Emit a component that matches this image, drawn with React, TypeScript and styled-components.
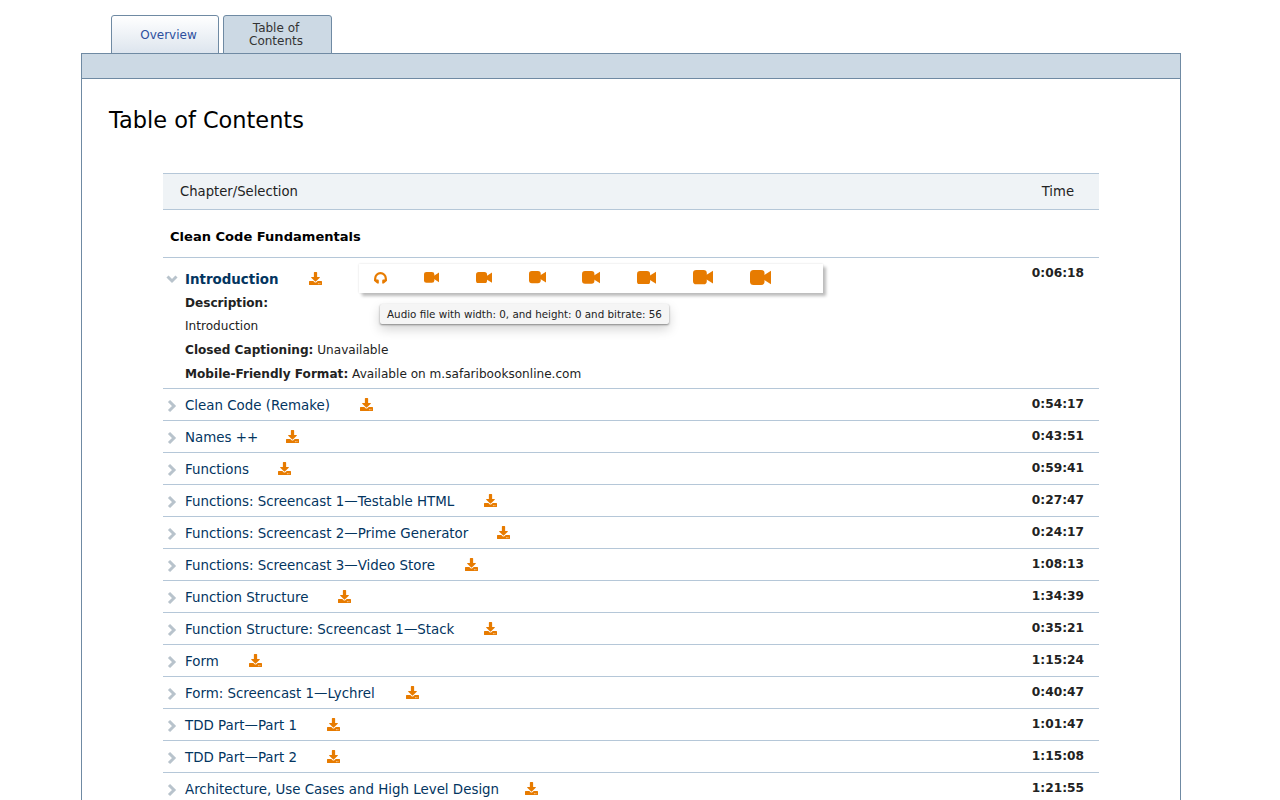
import styled, { createGlobalStyle } from "styled-components";
import { FaDownload } from "react-icons/fa";

const GlobalStyle = createGlobalStyle`
  html, body {
    margin: 0;
    padding: 0;
    height: 800px;
    overflow: hidden;
    background: #fff;
    font-family: "DejaVu Sans", Verdana, sans-serif;
    color: #222;
  }
`;

const Page = styled.div`
  width: 1100px;
  margin-left: 81px;
  padding-top: 15px;
`;

const Tabs = styled.div`
  display: flex;
  gap: 4px;
  padding-left: 30px;
  height: 38px;
`;

const Tab = styled.div<{ $active?: boolean }>`
  box-sizing: border-box;
  height: 39px;
  width: ${(p) => (p.$active ? 109 : 108)}px;
  padding: ${(p) => (p.$active ? "0 3px 0 0" : "2px 0 0 7px")};
  border: 1px solid #6f8aa3;
  border-radius: 3px 3px 0 0;
  display: flex;
  align-items: center;
  justify-content: center;
  text-align: center;
  font-size: 12px;
  line-height: 13px;
  color: ${(p) => (p.$active ? "#333" : "#2d4f9e")};
  background: ${(p) => (p.$active ? "#ccd9e4" : "linear-gradient(#ffffff, #dde5ee)")};
  position: relative;
  z-index: 1;
`;

const Panel = styled.div`
  border: 1px solid #6f8aa3;
  border-bottom: none;
  height: 760px;
`;

const Band = styled.div`
  height: 24px;
  background: #ccd9e4;
  border-bottom: 1px solid #6f8aa3;
`;

const Title = styled.h1`
  margin: 0;
  padding: 26px 0 0 27px;
  font-size: 22.45px;
  line-height: 30px;
  font-weight: 400;
  color: #000;
`;

const Table = styled.div`
  width: 936px;
  margin: 38px 0 0 81px;
`;

const HeadRow = styled.div`
  box-sizing: border-box;
  height: 37px;
  display: flex;
  justify-content: space-between;
  align-items: center;
  padding: 0 25px 0 17px;
  background: #eff3f6;
  border-top: 1px solid #b5c7d8;
  border-bottom: 1px solid #b5c7d8;
  font-size: 13.2px;
  color: #222;
`;

const SectionRow = styled.div`
  box-sizing: border-box;
  height: 48px;
  padding: 5px 0 0 7px;
  display: flex;
  align-items: center;
  font-size: 13.05px;
  font-weight: 700;
  color: #000;
  border-bottom: 1px solid #b5c7d8;
`;

const Row = styled.div<{ $open?: boolean }>`
  box-sizing: border-box;
  position: relative;
  display: flex;
  justify-content: space-between;
  height: ${(p) => (p.$open ? 131 : 32)}px;
  border-bottom: 1px solid #b5c7d8;
`;

const Main = styled.div`
  display: flex;
  flex-direction: column;
`;

const TitleLine = styled.div<{ $open?: boolean }>`
  display: flex;
  align-items: center;
  height: 32px;
  margin-top: ${(p) => (p.$open ? 5 : 0)}px;
`;

const Chevron = styled.svg`
  width: 14px;
  height: 14px;
  margin: 1px 6px 0 2px;
  flex: none;
`;

const Name = styled.span<{ $open?: boolean }>`
  font-size: 13.4px;
  color: #03355f;
  font-weight: ${(p) => (p.$open ? 700 : 400)};
`;

const Download = styled(FaDownload)<{ $gap: number }>`
  width: 13px;
  height: 13px;
  color: #e77b00;
  margin-left: ${(p) => p.$gap}px;
  margin-top: -2px;
  flex: none;
`;

const Duration = styled.span`
  font-size: 12.2px;
  font-weight: 700;
  line-height: 15px;
  padding: 8px 15px 0 0;
  color: #222;
`;

const Details = styled.div`
  padding-left: 22px;
  margin-top: -3.2px;
  font-size: 12.1px;
  line-height: 23.6px;
  color: #222;

  b {
    font-weight: 700;
  }
`;

const Formats = styled.div`
  position: absolute;
  left: 196px;
  top: 6px;
  box-sizing: border-box;
  width: 464px;
  height: 29px;
  padding: 0 0 2px 15px;
  display: flex;
  align-items: center;
  gap: 36.85px;
  background: #fff;
  box-shadow: 3px 3px 3px #bbb, 0 0 2px #ddd;
`;

const FormatIcon = styled.svg<{ $width: number }>`
  width: ${(p) => p.$width}px;
  flex: none;
  color: #e77b00;
`;

const Tooltip = styled.div`
  position: absolute;
  left: 217px;
  top: 46px;
  box-sizing: border-box;
  height: 20px;
  padding: 0 7px 1px;
  display: flex;
  align-items: center;
  white-space: nowrap;
  font-size: 10.35px;
  color: #222;
  background: #f5f5f5;
  border-radius: 2px;
  box-shadow: 0 1px 2px #888, 0 5px 12px rgba(0, 0, 0, 0.18);
`;

const rows: [string, string, number][] = [
  ["Clean Code (Remake)", "0:54:17", 30],
  ["Names ++", "0:43:51", 28],
  ["Functions", "0:59:41", 29],
  ["Functions: Screencast 1—Testable HTML", "0:27:47", 30],
  ["Functions: Screencast 2—Prime Generator", "0:24:17", 29],
  ["Functions: Screencast 3—Video Store", "1:08:13", 30],
  ["Function Structure", "1:34:39", 29],
  ["Function Structure: Screencast 1—Stack", "0:35:21", 30],
  ["Form", "1:15:24", 30],
  ["Form: Screencast 1—Lychrel", "0:40:47", 31],
  ["TDD Part—Part 1", "1:01:47", 30],
  ["TDD Part—Part 2", "1:15:08", 30],
  ["Architecture, Use Cases and High Level Design", "1:21:55", 26],
];

const videoWidths = [15, 16, 17, 18, 19, 20, 21];

function Arrow({ open }: { open?: boolean }) {
  return (
    <Chevron viewBox="0 0 14 14">
      <path
        d={open ? "M2.5 3.5L7 8l4.5-4.5" : "M4 2l5 5-5 5"}
        fill="none"
        stroke="#b8c3cc"
        strokeWidth="3"
      />
    </Chevron>
  );
}

function AudioIcon() {
  return (
    <FormatIcon $width={13} viewBox="0 0 13 12">
      <path d="M1.2 9V6.5a5.3 5.3 0 0 1 10.6 0V9" fill="none" stroke="currentColor" strokeWidth="2.2" />
      <path d="M.2 7.5h4l.6 1V11.6H3.2L.2 9zM12.8 7.5h-4l-.6 1V11.6h1.6l3-2.6z" fill="currentColor" />
    </FormatIcon>
  );
}

function VideoIcon({ width }: { width: number }) {
  return (
    <FormatIcon $width={width} viewBox="0 0 21 15">
      <rect width="14.5" height="15" rx="3.5" fill="currentColor" />
      <path d="M13.5 5.5L21 .8v13.4l-7.5-4.7z" fill="currentColor" />
    </FormatIcon>
  );
}

export default function App() {
  return (
    <Page>
      <GlobalStyle />
      <Tabs>
        <Tab>Overview</Tab>
        <Tab $active>
          Table of
          <br />
          Contents
        </Tab>
      </Tabs>
      <Panel>
        <Band />
        <Title>Table of Contents</Title>
        <Table>
          <HeadRow>
            <span>Chapter/Selection</span>
            <span>Time</span>
          </HeadRow>
          <SectionRow>Clean Code Fundamentals</SectionRow>
          <Row $open>
            <Main>
              <TitleLine $open>
                <Arrow open />
                <Name $open>Introduction</Name>
                <Download $gap={30} />
              </TitleLine>
              <Details>
                <div>
                  <b>Description:</b>
                </div>
                <div>Introduction</div>
                <div>
                  <b>Closed Captioning:</b> Unavailable
                </div>
                <div>
                  <b>Mobile-Friendly Format:</b> Available on m.safaribooksonline.com
                </div>
              </Details>
            </Main>
            <Duration>0:06:18</Duration>
            <Formats>
              <AudioIcon />
              {videoWidths.map((width) => (
                <VideoIcon key={width} width={width} />
              ))}
            </Formats>
            <Tooltip>Audio file with width: 0, and height: 0 and bitrate: 56</Tooltip>
          </Row>
          {rows.map(([name, time, gap]) => (
            <Row key={name}>
              <TitleLine>
                <Arrow />
                <Name>{name}</Name>
                <Download $gap={gap} />
              </TitleLine>
              <Duration>{time}</Duration>
            </Row>
          ))}
        </Table>
      </Panel>
    </Page>
  );
}
